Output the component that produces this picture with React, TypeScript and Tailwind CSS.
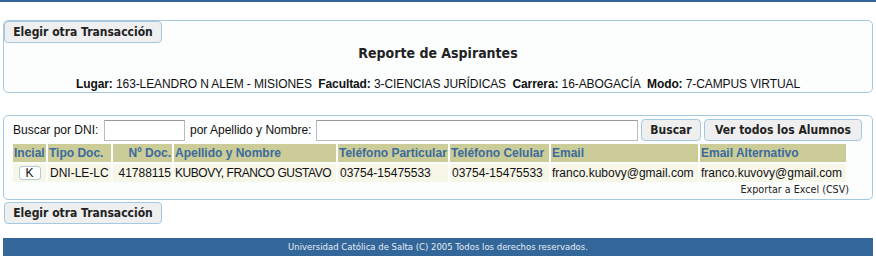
import React from "react";

const btn =
  "border border-[#a6c9e2] rounded-[4px] bg-[#efefef] text-[#222] font-bold leading-none [font-family:'DejaVu_Sans_Condensed','DejaVu_Sans',sans-serif] [font-stretch:condensed]";

const cols = [
  { label: "Incial", w: 33, align: "left" },
  { label: "Tipo Doc.", w: 63, align: "left" },
  { label: "Nº Doc.", w: 59, align: "right" },
  { label: "Apellido y Nombre", w: 162, align: "left" },
  { label: "Teléfono Particular", w: 110, align: "left" },
  { label: "Teléfono Celular", w: 99, align: "left" },
  { label: "Email", w: 147, align: "left" },
  { label: "Email Alternativo", w: 146, align: "left" },
];

export default function App() {
  return (
    <div className="w-[876px] h-[262px] bg-white overflow-hidden [font-family:'Liberation_Sans',Arial,sans-serif] text-[12px] text-[#111]">
      <div className="h-[2px] bg-[#336699]" />
      {/* Panel 1 */}
      <div className="mt-[18px] mx-[3px] h-[73px] border border-[#a6c9e2] rounded-[5px] bg-[#fcfdfd] flex flex-col">
        <div className="flex">
          <button className={`${btn} text-[12px] w-[158px] h-[22px]`}>Elegir otra Transacción</button>
        </div>
        <div className="text-center font-bold text-[14px] leading-none mt-[3px] text-[#222] [font-family:'DejaVu_Sans_Condensed','DejaVu_Sans',sans-serif] [font-stretch:condensed]">
          Reporte de Aspirantes
        </div>
        <div className="text-center mt-[18px] leading-none tracking-[-0.1px]">
          <b>Lugar:</b> 163-LEANDRO N ALEM - MISIONES&nbsp; <b>Facultad:</b> 3-CIENCIAS JURÍDICAS&nbsp; <b>Carrera:</b> 16-ABOGACÍA&nbsp; <b>Modo:</b> 7-CAMPUS VIRTUAL
        </div>
      </div>
      {/* Panel 2 */}
      <div className="mt-[22px] mx-[3px] h-[85px] border border-[#a6c9e2] rounded-[5px] bg-[#fcfdfd] flex flex-col">
        <div className="flex items-center mt-[3px] h-[22px]">
          <span className="ml-[9px] w-[91px]">Buscar por DNI:</span>
          <input className="w-[81px] h-[21px] border border-[#bbb] border-t-[#999] bg-white" />
          <span className="ml-[5px] w-[126px]">por Apellido y Nombre:</span>
          <input className="w-[322px] h-[21px] border border-[#bbb] border-t-[#999] bg-white" />
          <button className={`${btn} ml-[3px] w-[60px] h-[22px] text-[12px]`}>Buscar</button>
          <button className={`${btn} ml-[3px] w-[158px] h-[22px] text-[12px]`}>Ver todos los Alumnos</button>
        </div>
        <table className="ml-[7px] mt-[1px] border-separate border-spacing-[2px] table-fixed w-[837px]">
          <colgroup>
            {cols.map((c) => (
              <col key={c.label} style={{ width: c.w }} />
            ))}
          </colgroup>
          <thead>
            <tr>
              {cols.map((c) => (
                <th
                  key={c.label}
                  style={{ textAlign: c.align as "left" | "right" }}
                  className="h-[18px] p-0 px-[1px] bg-[#cccc99] text-[#3a6b9c] font-bold leading-none whitespace-nowrap overflow-visible"
                >
                  {c.label}
                </th>
              ))}
            </tr>
          </thead>
          <tbody>
            <tr className="bg-[#f6f6e9]">
              <td className="h-[18px] p-0 text-center">
                <span className="inline-flex items-center justify-center w-[22px] h-[14px] border border-[#b7c9d9] rounded-[3px] bg-white leading-none">K</span>
              </td>
              <td className="p-0 px-[2px] whitespace-nowrap">DNI-LE-LC</td>
              <td className="p-0 px-[1px] text-right whitespace-nowrap">41788115</td>
              <td className="p-0 px-[1px] whitespace-nowrap tracking-[-0.45px]">KUBOVY, FRANCO GUSTAVO</td>
              <td className="p-0 px-[2px] whitespace-nowrap">03754-15475533</td>
              <td className="p-0 px-[2px] whitespace-nowrap">03754-15475533</td>
              <td className="p-0 px-[1px] whitespace-nowrap">franco.kubovy@gmail.com</td>
              <td className="p-0 px-[1px] whitespace-nowrap">franco.kuvovy@gmail.com</td>
            </tr>
          </tbody>
        </table>
        <div className="w-[845px] text-right text-[9.6px] leading-none mt-[1px] [font-family:'DejaVu_Sans',Verdana,sans-serif] text-[#222]">
          Exportar a Excel (CSV)
        </div>
      </div>
      <div className="mt-[2px] ml-[4px]">
        <button className={`${btn} text-[12px] w-[158px] h-[22px]`}>Elegir otra Transacción</button>
      </div>
      <div className="mt-[14px] mx-[3px] h-[18px] bg-[#336699] flex items-center justify-center text-[8.5px] text-[#e8eef5] [font-family:'DejaVu_Sans',Verdana,sans-serif]">
        Universidad Católica de Salta (C) 2005 Todos los derechos reservados.
      </div>
    </div>
  );
}
